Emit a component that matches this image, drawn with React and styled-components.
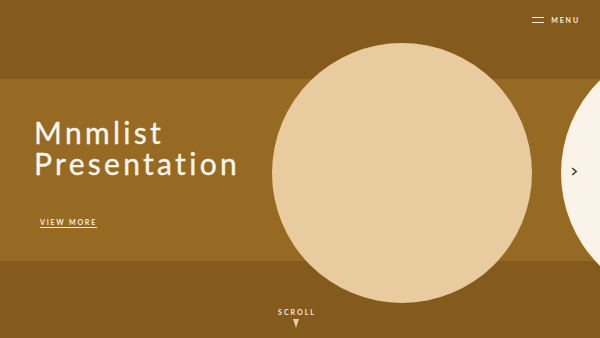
import styled, { createGlobalStyle } from 'styled-components';

const GlobalStyle = createGlobalStyle`
  html, body {
    margin: 0;
    padding: 0;
    width: 600px;
    height: 338px;
    overflow: hidden;
    background: #845b1d;
    font-family: Lato, "Open Sans", sans-serif;
  }
`;

const Page = styled.div`
  width: 600px;
  height: 338px;
  display: flex;
  flex-direction: column;
  overflow: hidden;
`;

const Header = styled.header`
  height: 79px;
  flex-shrink: 0;
  display: flex;
  justify-content: flex-end;
  align-items: flex-start;
  padding: 16px 20px 0 0;
  box-sizing: border-box;
`;

const MenuButton = styled.button`
  display: flex;
  align-items: center;
  gap: 7px;
  background: none;
  border: 0;
  padding: 0;
  color: #f6ecdd;
  font-family: Lato, sans-serif;
  font-weight: 700;
  font-size: 7px;
  letter-spacing: 1.9px;
  cursor: pointer;
`;

const Burger = styled.span`
  display: flex;
  flex-direction: column;
  gap: 3.5px;

  &::before, &::after {
    content: '';
    display: block;
    width: 12px;
    height: 1.5px;
    background: #f6ecdd;
  }
`;

const Stage = styled.section`
  position: relative;
  z-index: 1;
  height: 182px;
  flex-shrink: 0;
  background: #966a22;
  display: flex;
  align-items: center;
`;

const Intro = styled.div`
  width: 272px;
  flex-shrink: 0;
  box-sizing: border-box;
  padding: 0 0 0 34px;
  margin-top: 4px;
  color: #fbf6ee;
`;

const Title = styled.h1`
  margin: 0;
  font-weight: 400;
  font-size: 30px;
  line-height: 31px;
  letter-spacing: 3.3px;
  -webkit-text-stroke: 0.3px #fbf6ee;
`;

const MoreLink = styled.a`
  display: inline-block;
  margin: 39px 0 0 6px;
  color: #f6ecdd;
  font-size: 7px;
  font-weight: 700;
  letter-spacing: 1.8px;
  text-decoration: underline;
  text-underline-offset: 2px;
`;

const Track = styled.div`
  display: flex;
  gap: 29px;
  flex-shrink: 0;
  margin-top: 5px;
`;

const Slide = styled.div`
  width: 260px;
  height: 260px;
  border-radius: 50%;
  flex-shrink: 0;
  background: ${p => p.$color};
`;

const NextButton = styled.button`
  position: absolute;
  right: 18px;
  top: 50%;
  transform: translateY(-50%);
  margin-top: 1px;
  width: 16px;
  height: 16px;
  padding: 0;
  border: 0;
  background: none;
  display: flex;
  align-items: center;
  justify-content: center;
  cursor: pointer;
`;

const Footer = styled.footer`
  flex: 1;
  display: flex;
  flex-direction: column;
  align-items: center;
  padding: 47px 0 0 0;
  margin-left: -8px;
  box-sizing: border-box;
`;

const ScrollLabel = styled.span`
  color: #f4e8d5;
  font-size: 7px;
  font-weight: 700;
  letter-spacing: 2px;
  margin-right: -2px;
`;

const Triangle = styled.span`
  margin-top: 3px;
  width: 0;
  height: 0;
  border-left: 3.5px solid transparent;
  border-right: 3.5px solid transparent;
  border-top: 9px solid #e8cb9e;
`;

const slides = ['#e8cb9f', '#faf3e9'];

export default function App() {
  return (
    <Page>
      <GlobalStyle />
      <Header>
        <MenuButton>
          <Burger />
          MENU
        </MenuButton>
      </Header>
      <Stage>
        <Intro>
          <Title>Mnmlist<br />Presentation</Title>
          <MoreLink href="#">VIEW MORE</MoreLink>
        </Intro>
        <Track>
          {slides.map((c, i) => <Slide key={i} $color={c} />)}
        </Track>
        <NextButton aria-label="next">
          <svg width="7" height="9" viewBox="0 0 7 9">
            <path d="M1.2 1 L5.2 4.5 L1.2 8" fill="none" stroke="#4f3510" strokeWidth="1.5" />
          </svg>
        </NextButton>
      </Stage>
      <Footer>
        <ScrollLabel>SCROLL</ScrollLabel>
        <Triangle />
      </Footer>
    </Page>
  );
}
